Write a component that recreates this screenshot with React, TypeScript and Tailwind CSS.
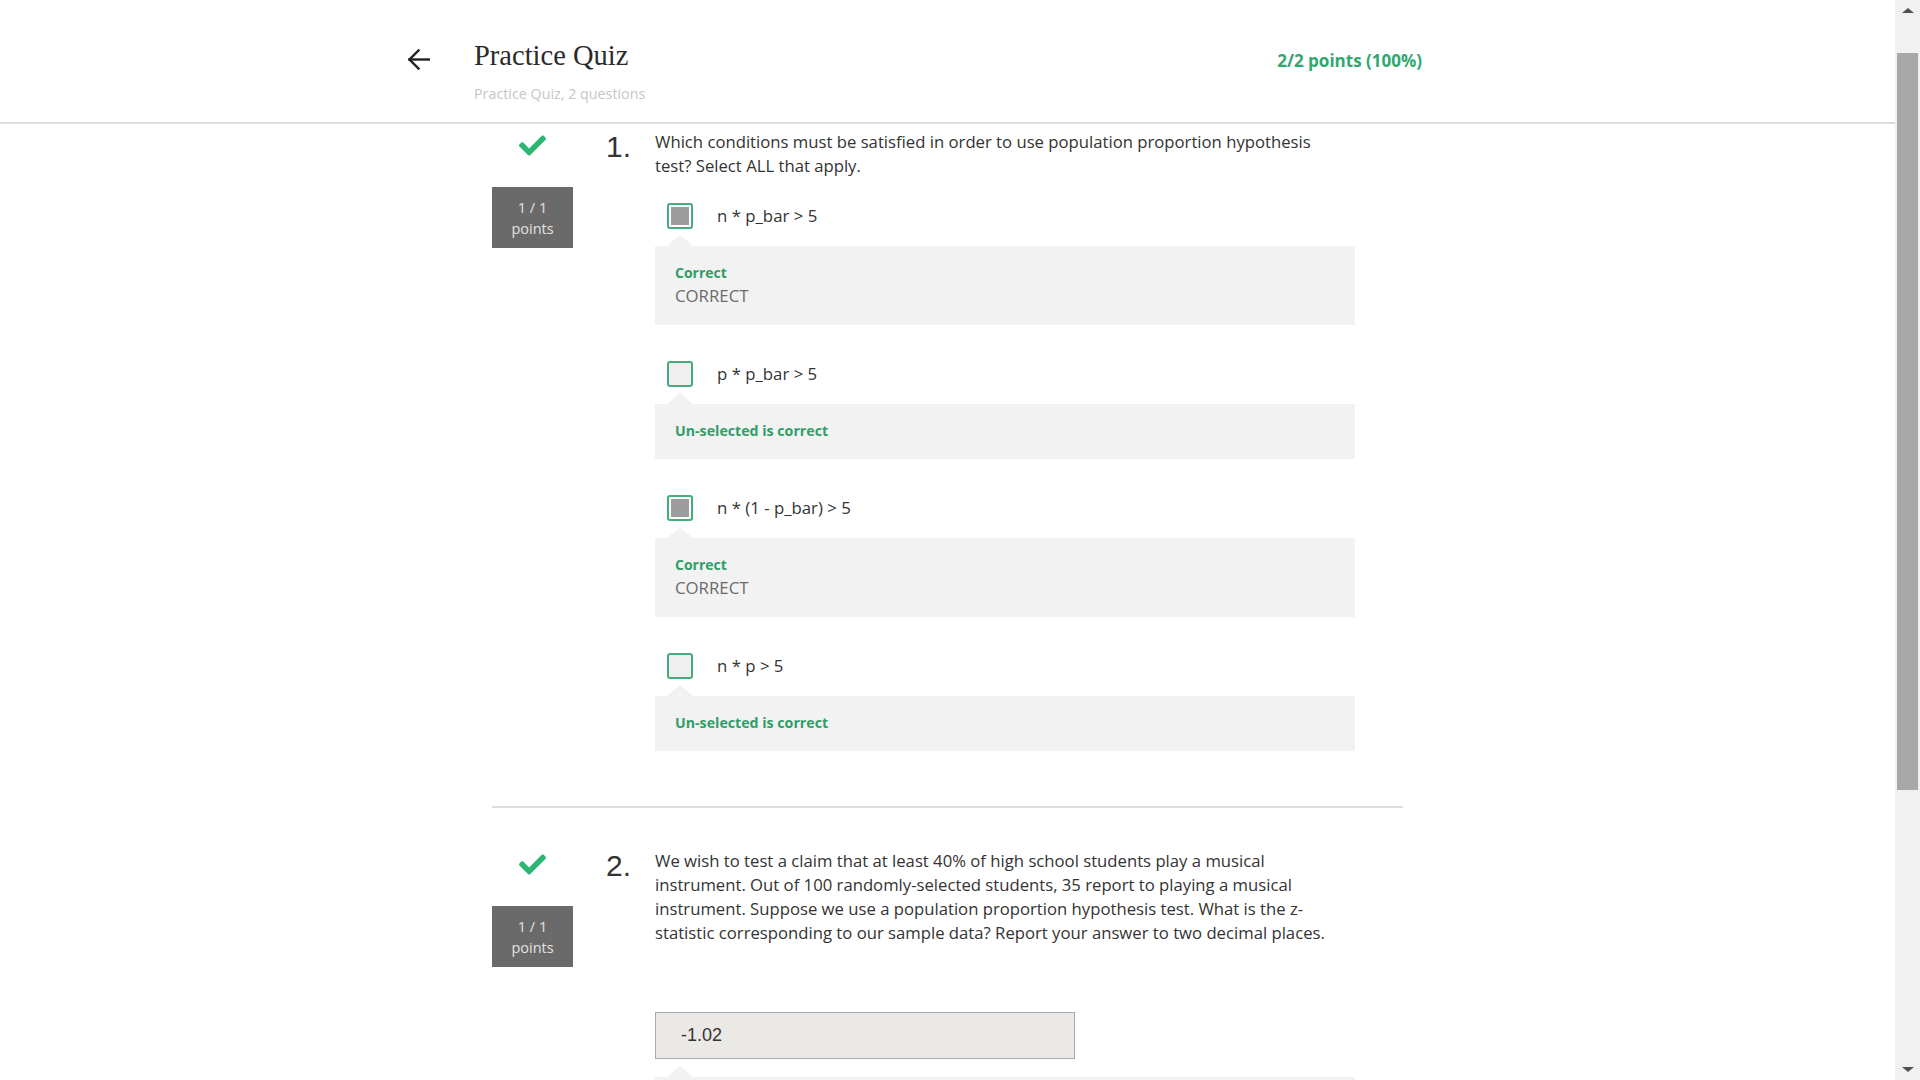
import React from 'react';
import { FaCheck } from 'react-icons/fa';

type Option = { label: string; checked: boolean };

const options: Option[] = [
  { label: 'n * p_bar > 5', checked: true },
  { label: 'p * p_bar > 5', checked: false },
  { label: 'n * (1 - p_bar) > 5', checked: true },
  { label: 'n * p > 5', checked: false },
];

function Notch() {
  return (
    <div className="absolute -top-[11px] left-[12px] h-0 w-0 border-x-[13px] border-b-[11px] border-x-transparent border-b-[#f2f2f2]" />
  );
}

function Checkbox({ checked }: { checked: boolean }) {
  return (
    <div
      className={`h-[26px] w-[26px] shrink-0 rounded-[3px] border-2 border-[#45ad7c] p-[2px] ${
        checked ? 'bg-white' : 'bg-[#efefef]'
      }`}
    >
      {checked && <div className="h-full w-full bg-[#9c9c9c]" />}
    </div>
  );
}

function ScoreColumn() {
  return (
    <div className="flex w-[81px] shrink-0 flex-col items-center">
      <FaCheck className="mt-[2px] text-[#2bb673]" size={27} />
      <div className="mt-[28px] flex h-[61px] w-[81px] flex-col items-center justify-center bg-[#6a6a6a] text-[14.5px] leading-[21px] text-[#e2e2e2]">
        <p>1 / 1</p>
        <p>points</p>
      </div>
    </div>
  );
}

function QuestionNumber({ n }: { n: number }) {
  return (
    <div className="ml-[33px] w-[49px] shrink-0">
      <p className="mt-[2px] font-['Liberation_Sans',Arial,sans-serif] text-[30px] leading-[30px] text-[#333]">
        {n}.
      </p>
    </div>
  );
}

function Scrollbar() {
  return (
    <div className="flex h-screen w-[25px] shrink-0 flex-col items-center bg-[#f1f1f1]">
      <div className="mt-[8px] h-0 w-0 border-x-[6px] border-b-[5px] border-x-transparent border-b-[#505050]" />
      <div className="mt-[40px] h-[737px] w-[21px] bg-[#a8a8a8]" />
      <div className="mt-auto mb-[8px] h-0 w-0 border-x-[6px] border-t-[5px] border-x-transparent border-t-[#505050]" />
    </div>
  );
}

export default function App() {
  return (
    <div className="flex h-screen w-full overflow-hidden bg-white font-['Open_Sans',sans-serif] text-[#333]">
      <div className="flex h-screen flex-1 flex-col overflow-hidden">
        <header className="flex h-[124px] shrink-0 items-start border-b-[2px] border-[#dcdcdc] pt-[40px] pl-[407px] pr-[473px]">
          <svg className="mt-[8px]" width="23" height="23" viewBox="0 0 23 23" fill="none" stroke="#222" strokeWidth="2.4" strokeLinecap="square">
            <path d="M2.5 11.5H22" />
            <path d="M11.5 2.5L2.5 11.5L11.5 20.5" />
          </svg>
          <div className="ml-[44px] flex flex-col">
            <h1 className="font-['Liberation_Serif',serif] text-[28.5px] leading-[32px] text-[#2b2b2b]">Practice Quiz</h1>
            <p className="mt-[13px] text-[14.3px] leading-[18px] text-[#c6c6c6]">Practice Quiz, 2 questions</p>
          </div>
          <p className="ml-auto mt-[11px] text-[17px] font-bold leading-[20px] text-[#30a86f]">2/2 points (100%)</p>
        </header>

        <main className="pl-[492px]">
          <section className="flex w-[911px] pt-[6px]">
            <ScoreColumn />
            <QuestionNumber n={1} />
            <div className="w-[700px]">
              <p className="max-w-[690px] text-[16.7px] leading-[24px]">
                Which conditions must be satisfied in order to use population proportion hypothesis test? Select ALL that apply.
              </p>
              <div className="mt-[25px] flex flex-col gap-[36px]">
                {options.map((o) => (
                  <div key={o.label}>
                    <div className="flex h-[26px] items-center pl-[12px]">
                      <Checkbox checked={o.checked} />
                      <span className="ml-[24px] text-[16.8px] leading-[24px] text-[#333]">{o.label}</span>
                    </div>
                    <div className="relative mt-[17px] bg-[#f2f2f2] px-[20px] pt-[16px] pb-[17px]">
                      <Notch />
                      {o.checked ? (
                        <>
                          <p className="text-[14px] font-bold leading-[22px] text-[#2f9e68]">Correct</p>
                          <p className="text-[16.8px] leading-[24px] text-[#6b6b6b]">CORRECT</p>
                        </>
                      ) : (
                        <p className="text-[14.2px] font-bold leading-[22px] text-[#2f9e68]">Un-selected is correct</p>
                      )}
                    </div>
                  </div>
                ))}
              </div>
            </div>
          </section>

          <div className="mt-[55px] h-[2px] w-[911px] bg-[#dedede]" />

          <section className="flex w-[911px] pt-[41px]">
            <ScoreColumn />
            <QuestionNumber n={2} />
            <div className="w-[700px]">
              <p className="max-w-[690px] text-[16.7px] leading-[24px]">
                We wish to test a claim that at least 40% of high school students play a musical instrument. Out of 100
                randomly-selected students, 35 report to playing a musical instrument. Suppose we use a population proportion
                hypothesis test. What is the z-statistic corresponding to our sample data? Report your answer to two decimal
                places.
              </p>
              <div className="mt-[67px] flex h-[47px] w-[420px] items-center border border-[#a9a9a9] bg-[#ebe9e6] pl-[25px] font-['Liberation_Sans',Arial,sans-serif] text-[18px] text-[#333]">
                -1.02
              </div>
              <div className="relative mt-[18px] h-[80px] bg-[#f2f2f2]">
                <Notch />
              </div>
            </div>
          </section>
        </main>
      </div>
      <Scrollbar />
    </div>
  );
}
